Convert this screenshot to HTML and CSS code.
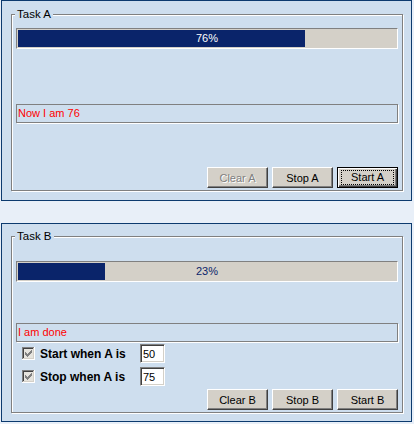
FILE: index.html
```html
<!DOCTYPE html>
<html>
<head>
<meta charset="utf-8">
<link rel="stylesheet" href="styles.css">
</head>
<body>
<div class="panel panel-a">
  <div class="group">
    <span class="legend">Task A</span>
    <div class="progress progress-a">
      <div class="fill" style="width:76%"></div>
      <span class="pct on-fill">76%</span>
    </div>
    <div class="status status-a">Now I am 76</div>
    <div class="buttons buttons-a">
      <button class="btn" disabled>Clear A</button>
      <button class="btn">Stop A</button>
      <button class="btn default"><span class="focus">Start A</span></button>
    </div>
  </div>
</div>
<div class="panel panel-b">
  <div class="group">
    <span class="legend">Task B</span>
    <div class="progress progress-b">
      <div class="fill" style="width:23%"></div>
      <span class="pct">23%</span>
    </div>
    <div class="status status-b">I am done</div>
    <div class="opt opt1">
      <svg class="check" width="13" height="13" viewBox="0 0 13 13" shape-rendering="crispEdges">
        <rect x="0" y="0" width="13" height="13" fill="#ffffff"/>
        <rect x="0" y="0" width="12" height="1" fill="#808080"/>
        <rect x="0" y="0" width="1" height="12" fill="#808080"/>
        <rect x="1" y="1" width="10" height="1" fill="#404040"/>
        <rect x="1" y="1" width="1" height="10" fill="#404040"/>
        <rect x="1" y="11" width="11" height="1" fill="#d4d0c8"/>
        <rect x="11" y="1" width="1" height="11" fill="#d4d0c8"/>
        <rect x="2" y="2" width="9" height="9" fill="#e6e4de"/>
        <g fill="#808080">
          <rect x="3" y="5" width="1" height="3"/>
          <rect x="4" y="6" width="1" height="3"/>
          <rect x="5" y="7" width="1" height="3"/>
          <rect x="6" y="6" width="1" height="3"/>
          <rect x="7" y="5" width="1" height="3"/>
          <rect x="8" y="4" width="1" height="3"/>
          <rect x="9" y="3" width="1" height="3"/>
        </g>
      </svg>
      <span class="opt-label">Start when A is</span>
      <input class="num" type="text" value="50" readonly>
    </div>
    <div class="opt opt2">
      <svg class="check" width="13" height="13" viewBox="0 0 13 13" shape-rendering="crispEdges">
        <rect x="0" y="0" width="13" height="13" fill="#ffffff"/>
        <rect x="0" y="0" width="12" height="1" fill="#808080"/>
        <rect x="0" y="0" width="1" height="12" fill="#808080"/>
        <rect x="1" y="1" width="10" height="1" fill="#404040"/>
        <rect x="1" y="1" width="1" height="10" fill="#404040"/>
        <rect x="1" y="11" width="11" height="1" fill="#d4d0c8"/>
        <rect x="11" y="1" width="1" height="11" fill="#d4d0c8"/>
        <rect x="2" y="2" width="9" height="9" fill="#e6e4de"/>
        <g fill="#808080">
          <rect x="3" y="5" width="1" height="3"/>
          <rect x="4" y="6" width="1" height="3"/>
          <rect x="5" y="7" width="1" height="3"/>
          <rect x="6" y="6" width="1" height="3"/>
          <rect x="7" y="5" width="1" height="3"/>
          <rect x="8" y="4" width="1" height="3"/>
          <rect x="9" y="3" width="1" height="3"/>
        </g>
      </svg>
      <span class="opt-label">Stop when A is</span>
      <input class="num" type="text" value="75" readonly>
    </div>
    <div class="buttons buttons-b">
      <button class="btn">Clear B</button>
      <button class="btn">Stop B</button>
      <button class="btn">Start B</button>
    </div>
  </div>
</div>
</body>
</html>
```
FILE: styles.css
```css
* { box-sizing: border-box; }

body {
  margin: 0;
  background: #e8eff8;
  font-family: "Liberation Sans", Arial, sans-serif;
  font-size: 11px;
  color: #000;
}

.panel {
  margin-left: 1px;
  width: 411px;
  border: 1px solid #0c3a6e;
  background: #cedeee;
}

.panel-a { padding: 13px 8px 9px 9px; }
.panel-b { margin-top: 22px; padding: 12px 8px 8px 9px; }

.group {
  display: flex;
  flex-direction: column;
  border: 1px solid #808080;
  box-shadow: inset 1px 1px 0 #fff, 1px 1px 0 #fff;
  padding: 0 4px 2px 4px;
}

.legend {
  align-self: flex-start;
  margin: -7px 0 0 -1px;
  padding: 0 2px;
  height: 13px;
  line-height: 13px;
  font-size: 11.5px;
  background: #cedeee;
}

.progress {
  display: grid;
  grid-template-columns: 1fr;
  height: 21px;
  border: 1px solid;
  border-color: #808080 #fff #fff #808080;
  padding: 1px;
  background: #d4d0c8;
}
.progress-a { margin-top: 7px; }
.progress-b { margin-top: 18px; }

.fill, .pct { grid-area: 1 / 1; }
.fill { height: 17px; background: #0a246a; justify-self: start; }
.pct { text-align: center; line-height: 17px; color: #0a246a; }
.pct.on-fill { color: #fff; }

.status {
  height: 19px;
  border: 1px solid #808080;
  box-shadow: 1px 1px 0 #fff;
  color: #ff0000;
  padding-left: 1px;
  line-height: 17px;
}
.status-a { margin-top: 55px; }
.status-b { margin-top: 41px; }

.opt {
  display: flex;
  align-items: center;
  height: 19px;
  padding-left: 6px;
}
.opt1 { margin-top: 2px; }
.opt2 { margin-top: 4px; }

.check { flex: none; margin-right: 5px; }

.opt-label {
  width: 100px;
  font-weight: bold;
  font-size: 12px;
}

.num {
  width: 25px;
  height: 19px;
  margin: 0;
  border: 1px solid;
  border-color: #808080 #fff #fff #808080;
  box-shadow: inset 1px 1px 0 #404040, inset -1px -1px 0 #d4d0c8;
  background: #fff;
  padding: 0 0 0 2px;
  font: 11px "Liberation Sans", Arial, sans-serif;
  color: #000;
  outline: none;
}

.buttons {
  display: flex;
  justify-content: flex-end;
  gap: 4px;
}
.buttons-a { margin-top: 44px; }
.buttons-b { margin-top: 3px; }

.btn {
  width: 61px;
  height: 21px;
  margin: 0;
  padding: 0;
  font-family: "Liberation Sans", Arial, sans-serif;
  font-size: 11px;
  font-weight: normal;
  color: #000;
  background: #d4d0c8;
  border: 1px solid;
  border-color: #fff #404040 #404040 #fff;
  box-shadow: inset -1px -1px 0 #808080;
  display: flex;
  align-items: center;
  justify-content: center;
}

.btn:disabled {
  color: #808080;
  text-shadow: 1px 1px 0 #fff;
}

.btn.default {
  border-color: #000;
  box-shadow: inset 1px 1px 0 #fff, inset -1px -1px 0 #404040, inset -2px -2px 0 #808080;
}

.focus {
  display: block;
  width: 53px;
  height: 15px;
  line-height: 13px;
  border: 1px dotted #000;
  text-align: center;
}
```
